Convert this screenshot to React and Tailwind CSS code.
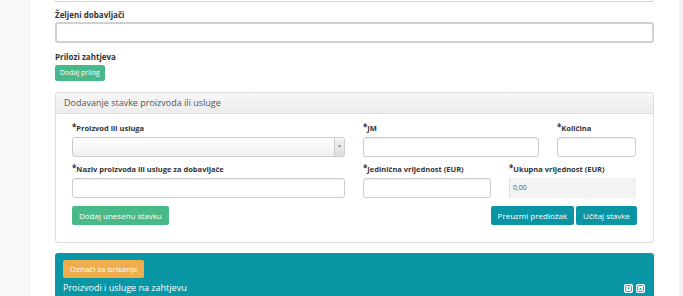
const Label = ({ children }) => (
  <div className="text-[7.5px] font-bold text-[#333] leading-[10px] mb-[4px]">
    <span className="relative -top-[1px] text-[8px] leading-none">*</span>
    {children}
  </div>
);

const Input = ({ className = "" }) => (
  <div
    className={`h-[20px] rounded-[3px] border border-[#ccc] bg-white shadow-[inset_0_1px_1px_rgba(0,0,0,0.075)] ${className}`}
  />
);

const BoxIcon = ({ up }) => (
  <svg width="9" height="9" viewBox="0 0 9 9">
    <rect x="0" y="0" width="9" height="9" rx="2" fill="#fff" />
    <rect x="1.6" y="1.6" width="5.8" height="5.8" rx="1" fill="none" stroke="#0a95a5" strokeWidth="0.9" />
    {up ? (
      <path d="M3 5.6 L4.5 3.6 L6 5.6 Z" fill="#0a95a5" />
    ) : (
      <path d="M3 3.6 L4.5 5.6 L6 3.6 Z" fill="#0a95a5" />
    )}
  </svg>
);

export default function App() {
  return (
    <div
      className="w-[683px] h-[296px] overflow-hidden flex bg-white"
      style={{ fontFamily: '"Open Sans", "Liberation Sans", sans-serif' }}
    >
      {/* left strip */}
      <div className="w-[30px] shrink-0 bg-[#f9f9f9] border-r border-[#efefef]" />

      {/* main */}
      <div className="flex-1 px-[25px] flex flex-col">
        <div className="shrink-0 h-[2px] border border-t-0 border-[#d5d5d5] rounded-b-[3px]" />

        <div className="shrink-0 mt-[8px] text-[8px] font-bold text-[#333] leading-[10px]">
          Željeni dobavljači
        </div>
        <div className="shrink-0 mt-[2px] h-[21px] rounded-[3px] border-2 border-[#d0d0d0] bg-white" />

        <div className="shrink-0 mt-[9px] text-[8px] font-bold text-[#333] leading-[10px]">
          Prilozi zahtjeva
        </div>
        <div className="shrink-0 mt-[3px] flex">
          <button className="h-[16px] px-[5px] rounded-[2px] bg-[#48b989] text-white text-[7px] leading-[16px]">
            Dodaj prilog
          </button>
        </div>

        {/* panel */}
        <div className="shrink-0 mt-[11px] border border-[#ddd] rounded-[3px] overflow-hidden">
          <div className="h-[21px] bg-gradient-to-b from-[#f7f7f7] to-[#ececec] border-b border-[#ddd] px-[8px] flex items-center text-[9px] text-[#555]">
            Dodavanje stavke proizvoda ili usluge
          </div>
          <div className="px-[16px] pt-[9px] pb-[17px]">
            <div className="flex gap-[18px]">
              <div className="w-[273px]">
                <Label>Proizvod ili usluga</Label>
                <div className="h-[20px] rounded-[3px] border border-[#ccc] bg-gradient-to-b from-white to-[#f0f0f0] flex justify-end overflow-hidden">
                  <div className="w-[10px] border-l border-[#ccc] bg-gradient-to-b from-[#f5f5f5] to-[#dcdcdc] flex items-center justify-center text-[5px] text-[#888]">
                    ▼
                  </div>
                </div>
              </div>
              <div className="w-[176px]">
                <Label>JM</Label>
                <Input />
              </div>
              <div className="w-[79px]">
                <Label>Količina</Label>
                <Input />
              </div>
            </div>

            <div className="flex gap-[18px] mt-[7px]">
              <div className="w-[273px]">
                <Label>Naziv proizvoda ili usluge za dobavljače</Label>
                <Input />
              </div>
              <div className="w-[128px]">
                <Label>Jedinična vrijednost (EUR)</Label>
                <Input />
              </div>
              <div className="w-[127px]">
                <Label>Ukupna vrijednost (EUR)</Label>
                <div className="h-[20px] bg-[#f3f3f3] border-l border-[#ddd] flex items-center px-[3px] text-[7px] text-[#555]">
                  0,00
                </div>
              </div>
            </div>

            <div className="flex items-center mt-[8px]">
              <button className="h-[19px] px-[7px] rounded-[2px] bg-[#48b989] text-white text-[8px]">
                Dodaj unesenu stavku
              </button>
              <div className="flex-1" />
              <button className="h-[19px] px-[7px] rounded-[2px] bg-[#0a95a5] text-white text-[8px]">
                Preuzmi predložak
              </button>
              <button className="ml-[2px] h-[19px] px-[7px] rounded-[2px] bg-[#0a95a5] text-white text-[8px]">
                Učitaj stavke
              </button>
            </div>
          </div>
        </div>

        {/* teal panel */}
        <div className="shrink-0 mt-[10px] h-[60px] bg-[#0996a5] rounded-t-[3px] px-[8px] pt-[7px]">
          <div className="flex">
            <button className="h-[18px] px-[7px] rounded-[2px] bg-[#efad4e] text-white text-[8px]">
              Označi za brisanje
            </button>
          </div>
          <div className="flex items-center justify-between mt-[4px]">
            <span className="text-[9px] text-white leading-[12px]">
              Proizvodi i usluge na zahtjevu
            </span>
            <div className="flex gap-[3px] mr-[1px]">
              <BoxIcon />
              <BoxIcon up />
            </div>
          </div>
        </div>
      </div>

      {/* right strip */}
      <div className="w-[4px] shrink-0 bg-[#f3f3f3]" />
    </div>
  );
}
